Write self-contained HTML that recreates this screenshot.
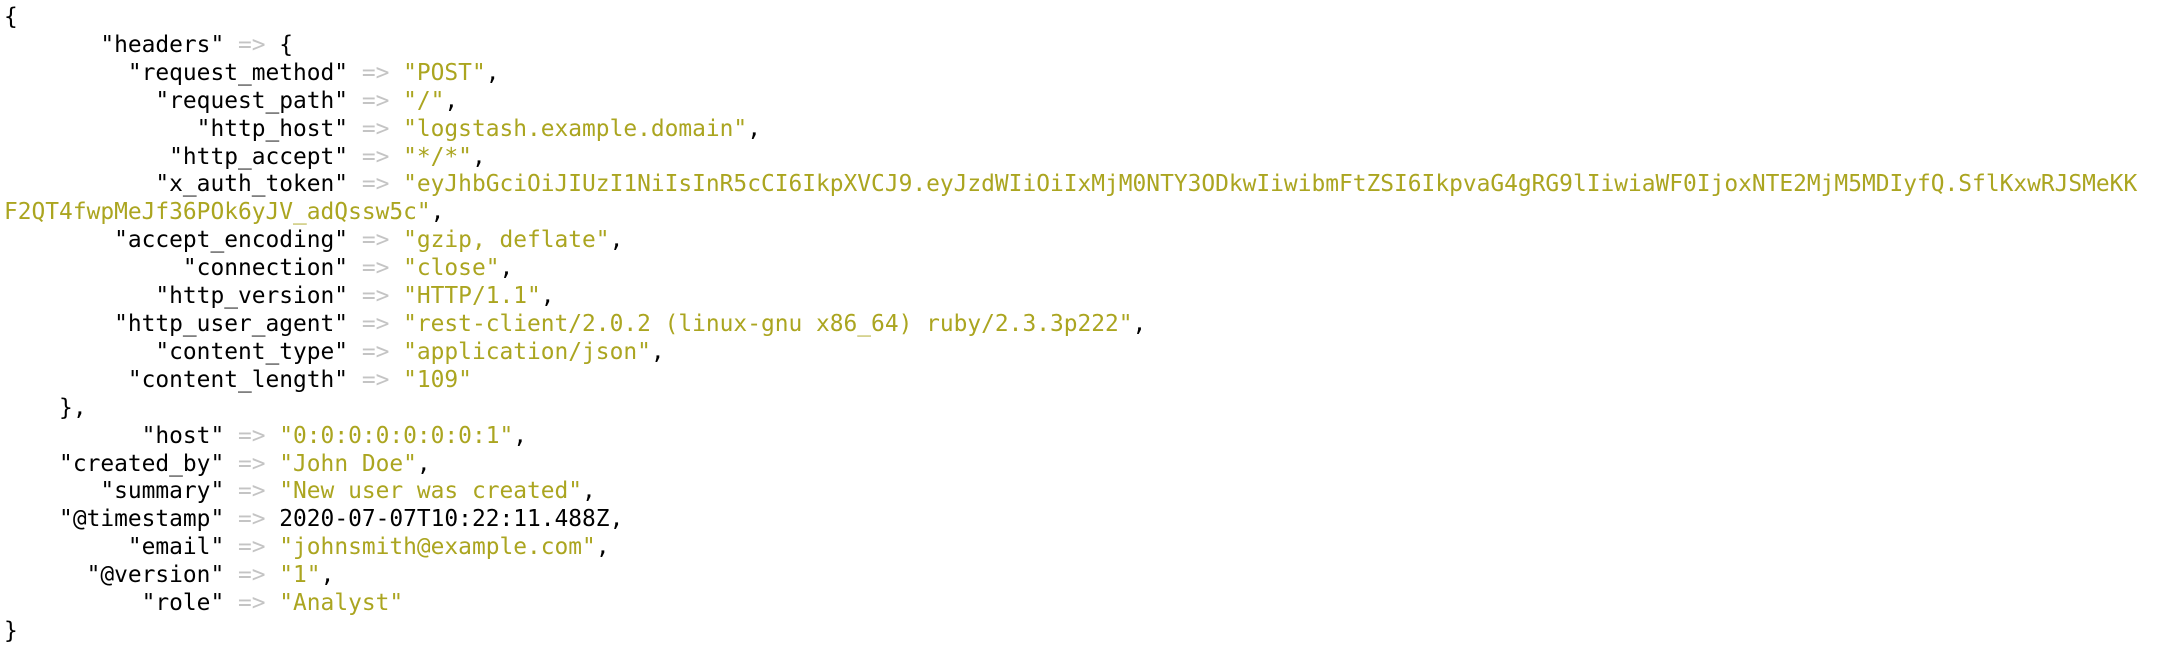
<!DOCTYPE html>
<html><head><meta charset="utf-8"><style>
html,body{margin:0;padding:0;background:#fff;width:2182px;height:646px;overflow:hidden}
pre{margin:0;padding:4px 0 0 4px;font-family:"DejaVu Sans Mono","Liberation Mono",monospace;font-size:22.87px;line-height:27.9px;color:#000;white-space:pre}
.a{color:#c4c4c4}.s{color:#aba520}
</style></head><body><pre>{
       "headers" <span class="a">=&gt;</span> {
         "request_method" <span class="a">=&gt;</span> <span class="s">"POST"</span>,
           "request_path" <span class="a">=&gt;</span> <span class="s">"/"</span>,
              "http_host" <span class="a">=&gt;</span> <span class="s">"logstash.example.domain"</span>,
            "http_accept" <span class="a">=&gt;</span> <span class="s">"*/*"</span>,
           "x_auth_token" <span class="a">=&gt;</span> <span class="s">"eyJhbGciOiJIUzI1NiIsInR5cCI6IkpXVCJ9.eyJzdWIiOiIxMjM0NTY3ODkwIiwibmFtZSI6IkpvaG4gRG9lIiwiaWF0IjoxNTE2MjM5MDIyfQ.SflKxwRJSMeKK</span>
<span class="s">F2QT4fwpMeJf36POk6yJV_adQssw5c"</span>,
        "accept_encoding" <span class="a">=&gt;</span> <span class="s">"gzip, deflate"</span>,
             "connection" <span class="a">=&gt;</span> <span class="s">"close"</span>,
           "http_version" <span class="a">=&gt;</span> <span class="s">"HTTP/1.1"</span>,
        "http_user_agent" <span class="a">=&gt;</span> <span class="s">"rest-client/2.0.2 (linux-gnu x86_64) ruby/2.3.3p222"</span>,
           "content_type" <span class="a">=&gt;</span> <span class="s">"application/json"</span>,
         "content_length" <span class="a">=&gt;</span> <span class="s">"109"</span>
    },
          "host" <span class="a">=&gt;</span> <span class="s">"0:0:0:0:0:0:0:1"</span>,
    "created_by" <span class="a">=&gt;</span> <span class="s">"John Doe"</span>,
       "summary" <span class="a">=&gt;</span> <span class="s">"New user was created"</span>,
    "@timestamp" <span class="a">=&gt;</span> 2020-07-07T10:22:11.488Z,
         "email" <span class="a">=&gt;</span> <span class="s">"johnsmith@example.com"</span>,
      "@version" <span class="a">=&gt;</span> <span class="s">"1"</span>,
          "role" <span class="a">=&gt;</span> <span class="s">"Analyst"</span>
}</pre></body></html>
